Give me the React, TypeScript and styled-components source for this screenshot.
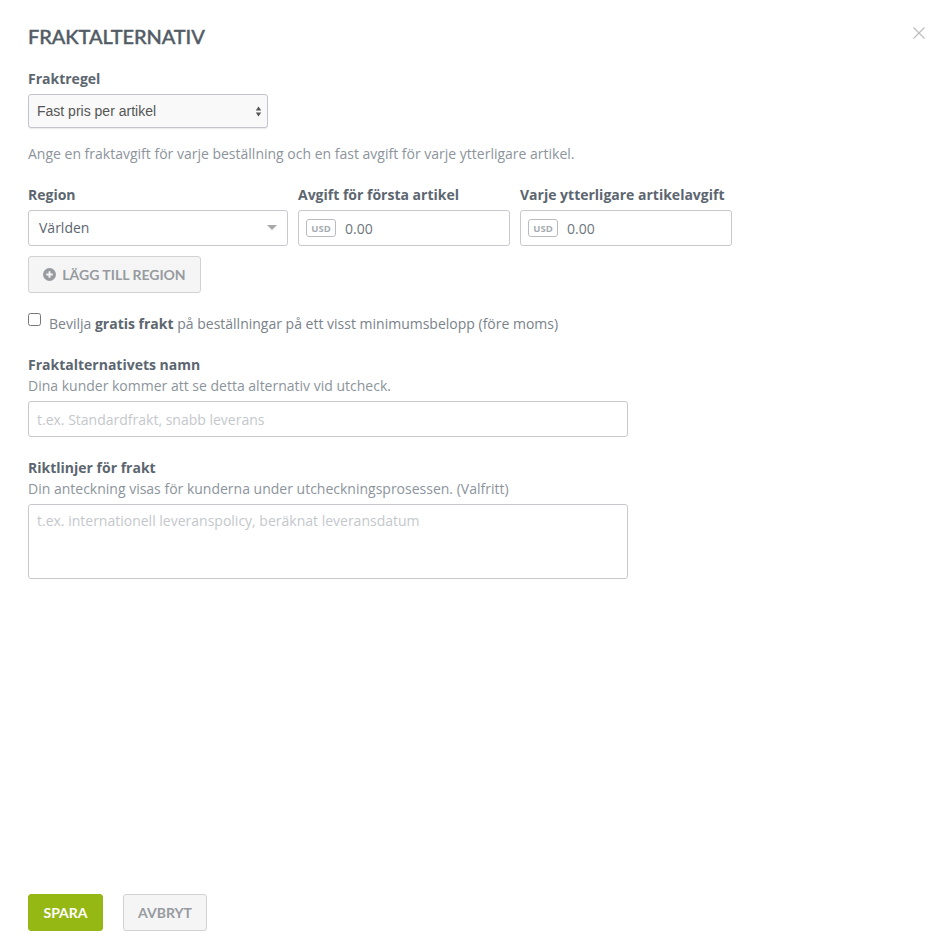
import React from 'react';
import styled, { createGlobalStyle } from 'styled-components';

const GlobalStyle = createGlobalStyle`
  html, body {
    margin: 0;
    padding: 0;
    background: #fff;
  }
  * {
    box-sizing: border-box;
  }
`;

const Page = styled.div`
  display: flex;
  flex-direction: column;
  height: 934px;
  padding: 0 21px 3px 28px;
  overflow: hidden;
  font-family: 'Open Sans', sans-serif;
  font-size: 14px;
  color: #5c6670;
`;

const Header = styled.div`
  display: flex;
  justify-content: space-between;
  align-items: flex-start;
  padding-top: 24px;
  height: 70px;
`;

const Title = styled.h1`
  margin: 0;
  font-family: Lato, sans-serif;
  font-size: 20px;
  line-height: 24px;
  font-weight: 500;
  letter-spacing: -0.1px;
  -webkit-text-stroke: 0.4px #525c66;
  color: #525c66;
`;

const CloseButton = styled.button`
  display: flex;
  width: 14px;
  height: 14px;
  margin-top: 2px;
  padding: 0;
  border: 0;
  background: none;
  color: #bdbdbd;
`;

const Label = styled.label`
  display: block;
  font-size: 14px;
  line-height: 18px;
  font-weight: 700;
  color: #5c6670;
`;

const Help = styled.div`
  font-size: 14px;
  line-height: 19px;
  color: #8c949c;
`;

const SelectWrap = styled.div`
  position: relative;
  width: 240px;
  height: 34px;
  margin-top: 6px;
`;

const NativeSelect = styled.select`
  appearance: none;
  width: 100%;
  height: 100%;
  padding: 0 8px;
  border: 1px solid #c4c4cc;
  border-radius: 3px;
  background: #f9f9f9;
  box-shadow: 0 1px 1px rgba(0, 0, 0, 0.08);
  font-family: 'Liberation Sans', Arial, sans-serif;
  font-size: 14px;
  color: #555;
`;

const SelectArrows = styled.svg`
  position: absolute;
  top: 12px;
  right: 6px;
  width: 7px;
  height: 11px;
  pointer-events: none;
`;

const RuleHelp = styled(Help)`
  margin-top: 16px;
`;

const FieldRow = styled.div`
  display: flex;
  gap: 10px;
  margin-top: 23px;
`;

const Field = styled.div<{ $width: number }>`
  display: flex;
  flex-direction: column;
  gap: 6px;
  width: ${(p) => p.$width}px;
`;

const Dropdown = styled.div`
  display: flex;
  justify-content: space-between;
  align-items: center;
  height: 36px;
  padding: 0 10px 2px;
  border: 1px solid #c8c8ce;
  border-radius: 3px;
  background: #fff;
  color: #5c6670;
`;

const Caret = styled.span`
  width: 0;
  height: 0;
  border-left: 5.5px solid transparent;
  border-right: 5.5px solid transparent;
  border-top: 5px solid #a8a8a8;
`;

const PriceBox = styled.div`
  display: flex;
  align-items: center;
  gap: 9px;
  height: 36px;
  padding: 0 7px;
  border: 1px solid #c8c8ce;
  border-radius: 3px;
`;

const Currency = styled.span`
  display: flex;
  align-items: center;
  justify-content: center;
  width: 30px;
  height: 18px;
  border: 1px solid #b8bcc2;
  border-radius: 3px;
  font-size: 9.5px;
  font-weight: 700;
  color: #a6acb2;
`;

const PriceInput = styled.input`
  flex: 1;
  min-width: 0;
  padding: 0;
  border: 0;
  outline: 0;
  font-family: inherit;
  font-size: 14px;
  color: #6e767e;
`;

const GhostButton = styled.button<{ $width: number }>`
  display: flex;
  align-items: center;
  justify-content: center;
  gap: 6px;
  width: ${(p) => p.$width}px;
  height: 37px;
  padding: 0;
  border: 1px solid #d2d2d2;
  border-radius: 3px;
  background: #f5f5f5;
  font-family: Lato, sans-serif;
  font-size: 14px;
  font-weight: 700;
  color: #979ba0;
`;

const AddButton = styled(GhostButton)`
  margin-top: 10px;
  padding-bottom: 1px;
`;

const CheckRow = styled.div`
  display: flex;
  align-items: flex-start;
  gap: 8px;
  margin-top: 20px;
  height: 22px;
`;

const Check = styled.input`
  width: 13px;
  height: 13px;
  margin: 0;
`;

const CheckText = styled.span`
  margin-top: 1px;
  line-height: 19px;
  color: #7a828a;

  b {
    font-weight: 700;
    color: #5c6670;
  }
`;

const Section = styled.div<{ $top: number }>`
  width: 600px;
  margin-top: ${(p) => p.$top}px;
`;

const SectionHelp = styled(Help)`
  margin-top: 2px;
`;

const TextInput = styled.input`
  display: block;
  width: 100%;
  height: 36px;
  margin-top: 6px;
  padding: 0 8px;
  border: 1px solid #c8c8ce;
  border-radius: 3px;
  outline: 0;
  font-family: inherit;
  font-size: 14px;

  &::placeholder {
    color: #c4c8cc;
    opacity: 1;
  }
`;

const TextArea = styled.textarea`
  display: block;
  width: 100%;
  height: 75px;
  margin-top: 6px;
  padding: 6px 8px;
  border: 1px solid #c8c8ce;
  border-radius: 3px;
  outline: 0;
  resize: none;
  font-family: inherit;
  font-size: 14px;
  line-height: 19px;

  &::placeholder {
    color: #c4c8cc;
    opacity: 1;
  }
`;

const Footer = styled.div`
  display: flex;
  gap: 20px;
  margin-top: auto;
`;

const SaveButton = styled.button`
  width: 75px;
  height: 37px;
  padding: 0;
  border: 1px solid #93b616;
  border-radius: 3px;
  background: #96b814;
  font-family: Lato, sans-serif;
  font-size: 14px;
  font-weight: 700;
  color: #fff;
`;

export default function App() {
  return (
    <>
      <GlobalStyle />
      <Page>
        <Header>
          <Title>FRAKTALTERNATIV</Title>
          <CloseButton aria-label="Stäng">
            <svg width="14" height="14" viewBox="0 0 14 14" fill="none" stroke="currentColor" strokeWidth="1.2">
              <path d="M1.5 1.5l11 11M12.5 1.5l-11 11" />
            </svg>
          </CloseButton>
        </Header>

        <Label>Fraktregel</Label>
        <SelectWrap>
          <NativeSelect defaultValue="item">
            <option value="item">Fast pris per artikel</option>
          </NativeSelect>
          <SelectArrows viewBox="0 0 7 11" fill="#555">
            <path d="M3.5 0.5L6.2 4.5H0.8zM3.5 10.5L0.8 6.5H6.2z" />
          </SelectArrows>
        </SelectWrap>
        <RuleHelp>Ange en fraktavgift för varje beställning och en fast avgift för varje ytterligare artikel.</RuleHelp>

        <FieldRow>
          <Field $width={260}>
            <Label>Region</Label>
            <Dropdown>
              Världen
              <Caret />
            </Dropdown>
          </Field>
          <Field $width={212}>
            <Label>Avgift för första artikel</Label>
            <PriceBox>
              <Currency>USD</Currency>
              <PriceInput defaultValue="0.00" />
            </PriceBox>
          </Field>
          <Field $width={212}>
            <Label>Varje ytterligare artikelavgift</Label>
            <PriceBox>
              <Currency>USD</Currency>
              <PriceInput defaultValue="0.00" />
            </PriceBox>
          </Field>
        </FieldRow>

        <AddButton $width={173}>
          <svg width="13" height="13" viewBox="0 0 14 14">
            <circle cx="7" cy="7" r="7" fill="#979ba0" />
            <path d="M7 3.5v7M3.5 7h7" stroke="#f5f5f5" strokeWidth="2" />
          </svg>
          LÄGG TILL REGION
        </AddButton>

        <CheckRow>
          <Check type="checkbox" />
          <CheckText>
            Bevilja <b>gratis frakt</b> på beställningar på ett visst minimumsbelopp (före moms)
          </CheckText>
        </CheckRow>

        <Section $top={21}>
          <Label>Fraktalternativets namn</Label>
          <SectionHelp>Dina kunder kommer att se detta alternativ vid utcheck.</SectionHelp>
          <TextInput placeholder="t.ex. Standardfrakt, snabb leverans" />
        </Section>

        <Section $top={22}>
          <Label>Riktlinjer för frakt</Label>
          <SectionHelp>Din anteckning visas för kunderna under utcheckningsprosessen. (Valfritt)</SectionHelp>
          <TextArea placeholder="t.ex. internationell leveranspolicy, beräknat leveransdatum" />
        </Section>

        <Footer>
          <SaveButton>SPARA</SaveButton>
          <GhostButton $width={84}>AVBRYT</GhostButton>
        </Footer>
      </Page>
    </>
  );
}
